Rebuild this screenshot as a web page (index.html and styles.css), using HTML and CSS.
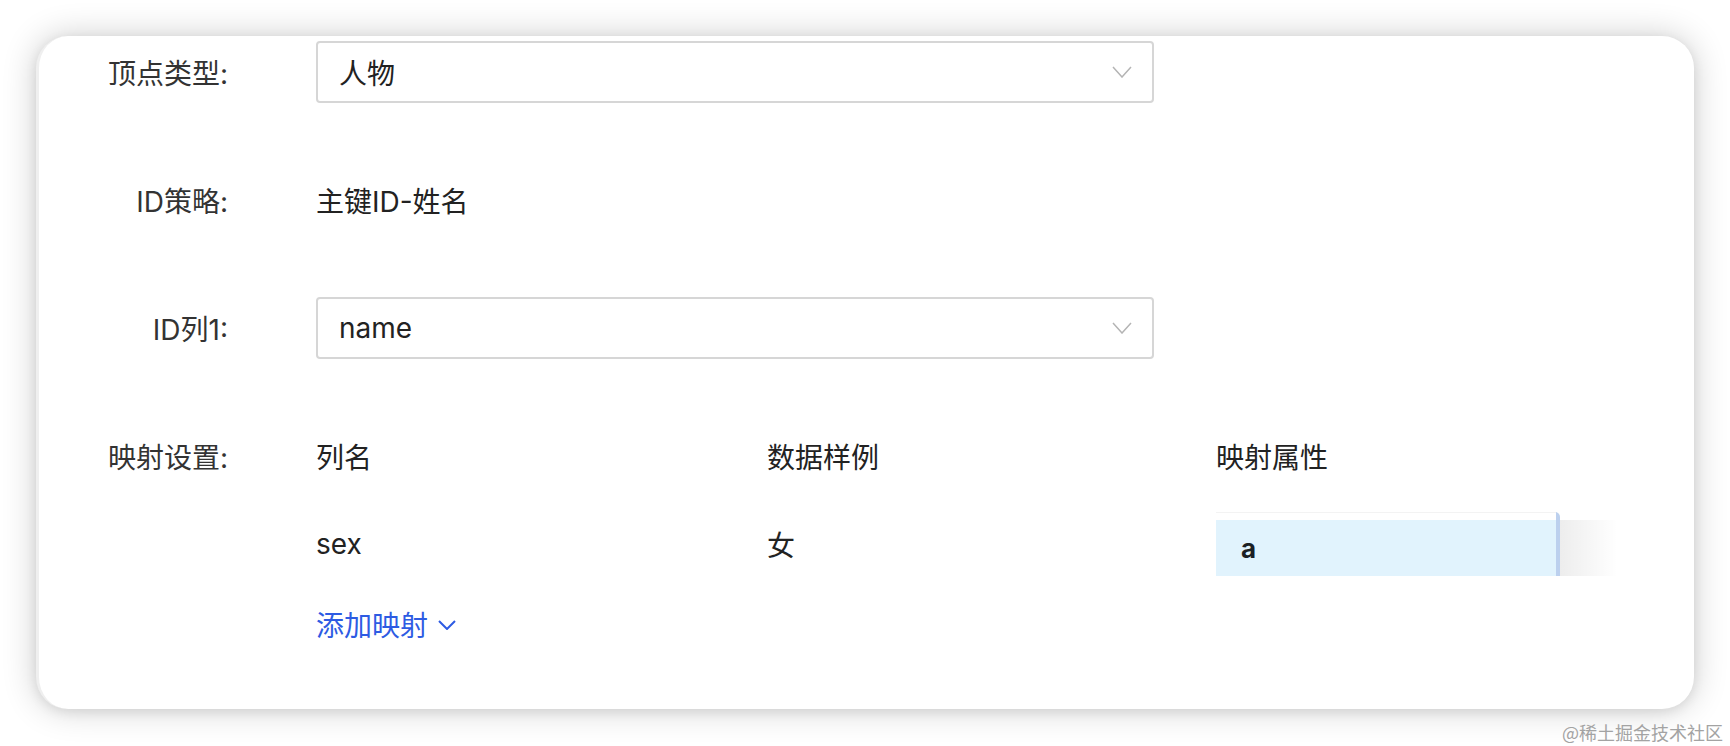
FILE: index.html
```html
<!DOCTYPE html>
<html lang="zh-CN">
<head>
<meta charset="utf-8">
<title>映射设置</title>
<link rel="stylesheet" href="styles.css">
</head>
<body>
<div class="page">
  <div class="card">
    <div class="form">
      <div class="row">
        <div class="label">顶点类型:</div>
        <div class="select">
          <span class="select-value">人物</span>
          <svg class="chev" width="20" height="12" viewBox="0 0 20 12"><polyline points="1,1 10,11 19,1" fill="none" stroke="#b4b4b4" stroke-width="1.5"/></svg>
        </div>
      </div>
      <div class="row">
        <div class="label">ID策略:</div>
        <div class="value">主键ID-姓名</div>
      </div>
      <div class="row">
        <div class="label">ID列1:</div>
        <div class="select">
          <span class="select-value">name</span>
          <svg class="chev" width="20" height="12" viewBox="0 0 20 12"><polyline points="1,1 10,11 19,1" fill="none" stroke="#b4b4b4" stroke-width="1.5"/></svg>
        </div>
      </div>
      <div class="row row-map">
        <div class="label">映射设置:</div>
        <div class="mapping">
          <div class="map-grid">
            <div class="cell">列名</div>
            <div class="cell">数据样例</div>
            <div class="cell">映射属性</div>
            <div class="cell data">sex</div>
            <div class="cell data">女</div>
            <div class="cell data attr">
              <div class="menu">
                <div class="menu-top"></div>
                <div class="menu-item">a</div>
              </div>
              <div class="menu-shade"></div>
            </div>
          </div>
          <div class="add">添加映射<svg class="add-chev" width="18" height="10" viewBox="0 0 18 10"><polyline points="1,1 9,9 17,1" fill="none" stroke="#2d5be3" stroke-width="2"/></svg></div>
        </div>
      </div>
    </div>
  </div>
  <div class="watermark">@稀土掘金技术社区</div>
</div>
</body>
</html>
```

FILE: styles.css
```css
html, body {
  margin: 0;
  padding: 0;
  background: #ffffff;
}
body {
  width: 1730px;
  height: 746px;
  overflow: hidden;
  font-family: "Inter", "Noto Sans CJK SC", sans-serif;
  color: #222;
}
.page {
  padding: 36px 36px 0 36px;
  display: flex;
  flex-direction: column;
}
.card {
  width: 1658px;
  height: 673px;
  box-sizing: border-box;
  background: #fff;
  border-radius: 32px;
  border-left: 3px solid #efefef;
  box-shadow: 0 0 34px rgba(0, 0, 0, 0.2), 0 3px 12px rgba(0, 0, 0, 0.08);
  padding-top: 5px;
}
.form {
  display: flex;
  flex-direction: column;
  gap: 66px;
}
.row {
  display: grid;
  grid-template-columns: 189px 838px;
  column-gap: 88px;
  align-items: center;
}
.row-map {
  align-items: start;
  grid-template-columns: 189px 1300px;
}
.label {
  height: 62px;
  display: flex;
  align-items: center;
  justify-content: flex-end;
  font-size: 28px;
  color: #333;
}
.value {
  height: 62px;
  display: flex;
  align-items: center;
  font-size: 28px;
  color: #222;
}
.select {
  height: 62px;
  box-sizing: border-box;
  border: 2px solid #d6d6d6;
  border-radius: 4px;
  display: flex;
  align-items: center;
  justify-content: space-between;
  padding: 0 20px 0 21px;
}
.select-value {
  font-size: 28px;
  color: #222;
}
.chev {
  display: block;
}
.mapping {
  display: flex;
  flex-direction: column;
}
.map-grid {
  display: grid;
  grid-template-columns: 451px 449px 420px;
  grid-template-rows: 62px 64px;
  row-gap: 25px;
  align-items: center;
}
.cell {
  font-size: 28px;
  color: #222;
}
.attr {
  height: 64px;
  display: flex;
  align-self: stretch;
}
.menu {
  width: 344px;
  box-sizing: border-box;
  border-right: 4px solid #bcd0ee;
  border-top-right-radius: 5px;
  display: flex;
  flex-direction: column;
}
.menu-top {
  height: 8px;
  background: #fff;
  border-top: 1px solid #f3f3f3;
  box-sizing: border-box;
}
.menu-item {
  flex: 1;
  background: #e1f3fd;
  display: flex;
  align-items: center;
  padding-left: 25px;
  font-family: "Inter", sans-serif;
  font-weight: 700;
  font-size: 26px;
  color: #1b1f24;
}
.menu-shade {
  width: 58px;
  height: 56px;
  margin-top: 8px;
  background: linear-gradient(to right, rgba(0, 0, 0, 0.07), rgba(0, 0, 0, 0));
}
.add {
  margin-top: 28px;
  height: 40px;
  display: flex;
  align-items: center;
  gap: 10px;
  font-size: 28px;
  color: #2d5be3;
}
.add-chev {
  display: block;
  margin-top: 2px;
}
.watermark {
  align-self: flex-end;
  margin-top: 12px;
  margin-right: -29px;
  font-size: 18px;
  line-height: 22px;
  color: #a3a3a3;
  font-family: "Noto Sans CJK SC", sans-serif;
}
```
